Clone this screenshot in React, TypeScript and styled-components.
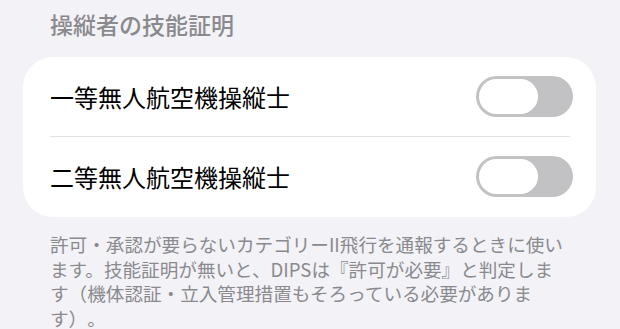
import React, { useState } from "react";
import styled, { createGlobalStyle } from "styled-components";

const Global = createGlobalStyle`
  html, body {
    margin: 0;
    padding: 0;
    background: #f2f2f7;
  }
  body {
    font-family: "Noto Sans CJK JP", "Noto Sans", sans-serif;
    -webkit-font-smoothing: antialiased;
    text-spacing-trim: space-all;
  }
`;

const Page = styled.div`
  width: 620px;
  height: 329px;
  overflow: hidden;
  background: #f2f2f7;
  padding-top: 10px;
  box-sizing: border-box;
`;

const SectionHeader = styled.div`
  margin: 0 0 0 50px;
  font-size: 23px;
  line-height: 28px;
  font-weight: 500;
  color: #8a8a8e;
  height: 47px;
`;

const Card = styled.div`
  margin: 0 24px 0 23px;
  background: #ffffff;
  border-radius: 30px;
  overflow: hidden;
`;

const Row = styled.div<{ $divider?: boolean }>`
  position: relative;
  height: 80px;
  display: flex;
  align-items: center;
  justify-content: space-between;
  padding: 0 23px 0 27px;
  ${(p) =>
    p.$divider
      ? `&::after {
    content: "";
    position: absolute;
    left: 27px;
    right: 26px;
    bottom: 0;
    height: 1px;
    background: #e2e2e5;
  }`
      : ""}
`;

const Label = styled.span`
  font-size: 24px;
  line-height: 1;
  color: #000000;
  letter-spacing: 0;
`;

const Track = styled.button<{ $on: boolean }>`
  width: 97px;
  height: 41px;
  border-radius: 21px;
  border: none;
  padding: 3px;
  margin-top: -1px;
  background: ${(p) => (p.$on ? "#34c759" : "#c2c2c4")};
  display: flex;
  justify-content: ${(p) => (p.$on ? "flex-end" : "flex-start")};
  cursor: pointer;
  box-sizing: border-box;
`;

const Knob = styled.span`
  width: 59px;
  height: 35px;
  border-radius: 18px;
  background: #ffffff;
  display: block;
`;

const Footer = styled.div`
  margin: 15px 0 0 50px;
  font-size: 18.6px;
  line-height: 24.5px;
  color: #8a8a8e;
  white-space: nowrap;
  text-spacing-trim: space-all;
`;

const Toggle: React.FC = () => {
  const [on, setOn] = useState(false);
  return (
    <Track $on={on} onClick={() => setOn(!on)} aria-pressed={on}>
      <Knob />
    </Track>
  );
};

export default function App() {
  return (
    <>
      <Global />
      <Page>
        <SectionHeader>操縦者の技能証明</SectionHeader>
        <Card>
          <Row $divider>
            <Label>一等無人航空機操縦士</Label>
            <Toggle />
          </Row>
          <Row>
            <Label>二等無人航空機操縦士</Label>
            <Toggle />
          </Row>
        </Card>
        <Footer>
          許可・承認が要らないカテゴリーII飛行を通報するときに使い
          <br />
          ます。技能証明が無いと、DIPSは『許可が必要』と判定しま
          <br />
          す（機体認証・立入管理措置もそろっている必要がありま
          <br />
          す）。
        </Footer>
      </Page>
    </>
  );
}
